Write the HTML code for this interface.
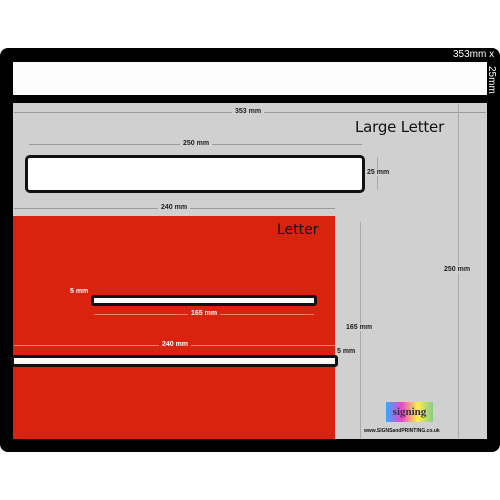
<!DOCTYPE html>
<html><head><style>
body{margin:0;width:500px;height:500px;background:#fff;position:relative;overflow:hidden;font-family:"Liberation Sans",sans-serif}
div{position:absolute;box-sizing:border-box}
.t{font-size:7px;font-weight:bold;color:#222;white-space:nowrap}
.w{color:#fff}
.hl{height:1px;background:#999}
.vl{width:1px;background:#aaa}
</style></head><body>
<div style="left:0;top:48px;width:500px;height:404px;background:#000;border-radius:8px"></div>
<div style="left:13px;top:62px;width:474px;height:33px;background:#fdfdfd"></div>
<div style="left:453px;top:49px;color:#fff;font-size:10px">353mm x</div>
<div style="top:66px;color:#fff;font-size:10px;transform:rotate(90deg);transform-origin:0 0;left:497px">25mm</div>
<div style="left:13px;top:103px;width:474px;height:336px;background:#d0d0d0"></div>
<div class="hl" style="left:14px;top:112px;width:472px"></div>
<div class="t" style="left:232px;top:108px;background:#d0d0d0;padding:0 3px">353 mm</div>
<div style="left:355px;top:118px;font-size:15px;letter-spacing:-0.2px;color:#111;font-family:'DejaVu Sans',sans-serif">Large Letter</div>
<div class="hl" style="left:29px;top:144px;width:333px"></div>
<div class="t" style="left:180px;top:140px;background:#d0d0d0;padding:0 3px">250 mm</div>
<div style="left:25px;top:155px;width:340px;height:38px;background:#fff;border:3px solid #111;border-radius:5px"></div>
<div class="vl" style="left:377px;top:157px;height:33px"></div>
<div class="t" style="left:367px;top:169px;background:#d0d0d0">25 mm</div>
<div class="hl" style="left:14px;top:208px;width:321px"></div>
<div class="t" style="left:158px;top:204px;background:#d0d0d0;padding:0 3px">240 mm</div>
<div style="left:13px;top:216px;width:322px;height:223px;background:#d9230f"></div>
<div style="left:277px;top:222px;font-size:14px;color:#111;font-family:'DejaVu Sans',sans-serif">Letter</div>
<div class="vl" style="left:360px;top:222px;height:217px"></div>
<div class="vl" style="left:458px;top:104px;height:335px"></div>
<div class="t" style="left:444px;top:266px;background:#d0d0d0">250 mm</div>
<div class="t" style="left:346px;top:324px;background:#d0d0d0">165 mm</div>
<div class="t w" style="left:70px;top:288px">5 mm</div>
<div style="left:91px;top:295px;width:226px;height:11px;background:#fff;border:3px solid #111;border-radius:3px"></div>
<div class="hl" style="left:94px;top:314px;width:220px;background:#f08070"></div>
<div class="t w" style="left:188px;top:310px;background:#d9230f;padding:0 3px">165 mm</div>
<div class="hl" style="left:14px;top:345px;width:321px;background:#f08070"></div>
<div class="t w" style="left:159px;top:341px;background:#d9230f;padding:0 3px">240 mm</div>
<div class="t" style="left:337px;top:348px">5 mm</div>
<div style="left:11px;top:355px;width:327px;height:12px;background:#fff;border:3px solid #111;border-radius:3px"></div>
<div style="left:386px;top:402px;width:47px;height:20px;background:linear-gradient(90deg,#3af,#e4c,#fe4,#8c8);font:bold 11px 'Liberation Serif',serif;color:#334;text-align:center;line-height:20px">signing</div>
<div style="left:364px;top:428px;font-size:5px;font-weight:bold;color:#111">www.SIGNSandPRINTING.co.uk</div>
</body></html>
